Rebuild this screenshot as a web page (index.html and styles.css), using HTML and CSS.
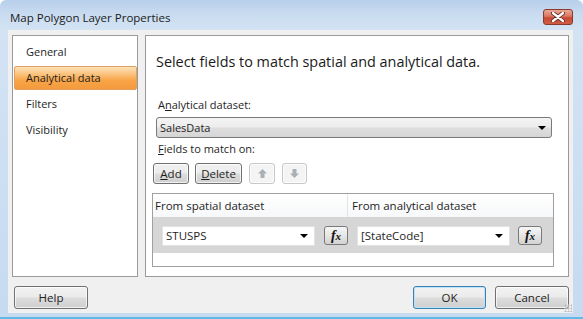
FILE: index.html
```html
<!DOCTYPE html>
<html lang="en">
<head>
    <meta charset="UTF-8">
    <title>Map Polygon Layer Properties</title>
    <link rel="stylesheet" href="styles.css">
</head>
<body>
    <div class="window">
        <div class="titlebar">
            <span class="title">Map Polygon Layer Properties</span>
            <div class="close">
                <svg width="14" height="10" viewBox="0 0 14 10">
                    <path d="M2 1 L12 9 M12 1 L2 9" stroke="#5a2318" stroke-width="4" stroke-linecap="round"/>
                    <path d="M2 1 L12 9 M12 1 L2 9" stroke="#ffffff" stroke-width="2.4" stroke-linecap="round"/>
                </svg>
            </div>
        </div>
        <div class="client">
            <div class="panes">
                <ul class="nav">
                    <li>General</li>
                    <li class="active">Analytical data</li>
                    <li>Filters</li>
                    <li>Visibility</li>
                </ul>
                <section class="page">
                    <h2>Select fields to match spatial and analytical data.</h2>
                    <div class="label">A<u>n</u>alytical dataset:</div>
                    <div class="dropdown">
                        <span>SalesData</span>
                        <span class="arrow"></span>
                    </div>
                    <div class="label label-fields"><u>F</u>ields to match on:</div>
                    <div class="toolbar">
                        <button class="btn btn-add"><u>A</u>dd</button>
                        <button class="btn btn-delete"><u>D</u>elete</button>
                        <button class="btn btn-icon" disabled>
                            <svg width="9" height="9" viewBox="0 0 9 9"><path d="M4.5 0 L9 4.5 L6.5 4.5 L6.5 9 L2.5 9 L2.5 4.5 L0 4.5 Z" fill="#aab0b6"/></svg>
                        </button>
                        <button class="btn btn-icon btn-down" disabled>
                            <svg width="9" height="9" viewBox="0 0 9 9"><path d="M4.5 9 L9 4.5 L6.5 4.5 L6.5 0 L2.5 0 L2.5 4.5 L0 4.5 Z" fill="#aab0b6"/></svg>
                        </button>
                    </div>
                    <div class="grid">
                        <div class="grid-head">
                            <div class="col col-first">From spatial dataset</div>
                            <div class="col">From analytical dataset</div>
                        </div>
                        <div class="grid-row">
                            <div class="cell cell-first">
                                <div class="combo"><span>STUSPS</span><span class="arrow"></span></div>
                                <button class="fx"><i>f</i><i class="x">x</i></button>
                            </div>
                            <div class="cell">
                                <div class="combo"><span>[StateCode]</span><span class="arrow"></span></div>
                                <button class="fx"><i>f</i><i class="x">x</i></button>
                            </div>
                        </div>
                    </div>
                </section>
            </div>
            <div class="footer">
                <button class="btn btn-help">Help</button>
                <span class="spacer"></span>
                <button class="btn btn-ok">OK</button>
                <button class="btn btn-cancel">Cancel</button>
            </div>
            <div class="grip"></div>
        </div>
    </div>
</body>
</html>
```
FILE: styles.css
```css
body {
    margin: 0;
    font-family: "Open Sans", "Noto Sans", Arial, sans-serif;
    font-size: 11px;
    color: #1e1e1e;
}
.window {
    width: 583px;
    height: 319px;
    box-sizing: border-box;
    display: flex;
    flex-direction: column;
    background: linear-gradient(180deg, #b7cfea 0px, #c9dbf0 14px, #d3e3f4 30px, #c6daf0 100%);
    border-radius: 6px 6px 0 0;
    border-bottom: 2px solid #62b8e6;
}
.titlebar {
    height: 30px;
    display: flex;
    align-items: flex-start;
}
.title {
    padding: 11px 0 0 10px;
    font-size: 11.5px;
    line-height: 14px;
    color: #1a1a1a;
    flex: 1;
}
.close {
    width: 30px;
    height: 16px;
    margin: 9px 10px 0 0;
    box-sizing: border-box;
    border: 1px solid #8a3a2c;
    border-radius: 3px;
    background: linear-gradient(180deg, #eaa996 0%, #d97561 45%, #c84a33 55%, #cf5d43 100%);
    display: flex;
    align-items: center;
    justify-content: center;
}
.client {
    margin: 0 10px 4px 8px;
    flex: 1;
    background: #f0f0f0;
    padding: 5px 4px 0 4px;
    position: relative;
}
.panes {
    display: flex;
    gap: 7px;
    height: 242px;
}
.nav {
    width: 126px;
    margin: 0;
    padding: 4px 0 0 0;
    list-style: none;
    background: #ffffff;
    border: 1px solid #9a9a9a;
    box-sizing: border-box;
}
.nav li {
    height: 24px;
    line-height: 24px;
    margin: 0 0 2px 1px;
    padding-left: 12px;
    font-size: 11px;
}
.nav li.active {
    background: linear-gradient(180deg, #fde2b8 0%, #fbc582 30%, #f8a548 60%, #f39a3c 100%);
    border: 1px solid #e0a060;
    border-radius: 2px;
    line-height: 22px;
    height: 22px;
    padding-left: 11px;
}
.page {
    flex: 1;
    background: #ffffff;
    border: 1px solid #9a9a9a;
    box-sizing: border-box;
}
.page h2 {
    margin: 16px 0 0 10px;
    font-size: 14.4px;
    line-height: 20px;
    font-weight: normal;
    color: #1a1a1a;
}
.label {
    margin: 25px 0 0 12px;
    line-height: 16px;
}
.label-fields {
    margin-top: 3px;
}
.dropdown {
    margin: 4px 16px 0 10px;
    height: 21px;
    box-sizing: border-box;
    border: 1px solid #7a7a7a;
    border-radius: 3px;
    background: linear-gradient(180deg, #f4f4f4 0%, #ececec 48%, #dedede 52%, #d6d6d6 100%);
    display: flex;
    align-items: center;
    justify-content: space-between;
    padding: 0 5px 0 3px;
}
.arrow {
    width: 0;
    height: 0;
    border-left: 4px solid transparent;
    border-right: 4px solid transparent;
    border-top: 4px solid #000000;
}
.toolbar {
    margin: 6px 0 0 7px;
    display: flex;
    gap: 6px;
}
.btn {
    font-family: inherit;
    font-size: 11.5px;
    color: #1e1e1e;
    height: 21px;
    padding: 0;
    box-sizing: border-box;
    border: 1px solid #707070;
    border-radius: 3px;
    background: linear-gradient(180deg, #f2f2f2 0%, #ebebeb 48%, #dddddd 52%, #cfcfcf 100%);
    box-shadow: inset 0 0 0 1px rgba(255, 255, 255, 0.7);
}
.btn-add {
    width: 36px;
}
.btn-delete {
    width: 47px;
}
.btn-icon {
    width: 26px;
    margin-left: 1px;
    border-color: #c8c8c8;
    background: #f4f4f4;
    display: flex;
    align-items: center;
    justify-content: center;
}
.btn-down {
    width: 25px;
}
.grid {
    margin: 9px 14px 0 6px;
    height: 74px;
    box-sizing: border-box;
    border: 1px solid #a0a0a0;
    background: #ffffff;
}
.grid-head {
    display: flex;
    height: 23px;
    background: linear-gradient(180deg, #ffffff 0%, #f7f8fa 100%);
    border-bottom: 1px solid #d5d5d5;
}
.col {
    flex: 1;
    line-height: 23px;
    padding-left: 4px;
    font-size: 11.5px;
}
.col-first {
    flex: none;
    width: 195px;
    box-sizing: border-box;
    padding-left: 2px;
    border-right: 1px solid #e4e4e4;
}
.grid-row {
    display: flex;
    height: 35px;
    background: #d6d6d6;
}
.cell {
    flex: 1;
    display: flex;
    align-items: center;
    gap: 8px;
    padding-left: 9px;
}
.cell-first {
    flex: none;
    width: 195px;
    box-sizing: border-box;
    gap: 9px;
}
.combo {
    width: 153px;
    height: 20px;
    box-sizing: border-box;
    background: #ffffff;
    border: 1px solid #e2e2e2;
    display: flex;
    align-items: center;
    justify-content: space-between;
    padding: 0 6px 0 3px;
    font-size: 11.5px;
}
.fx {
    width: 24px;
    height: 19px;
    padding: 0;
    border: 1px solid #7a7a7a;
    border-radius: 3px;
    background: linear-gradient(180deg, #f6f6f6 0%, #e6e6e6 50%, #d2d2d2 100%);
    font-family: "Liberation Serif", "DejaVu Serif", serif;
    font-weight: bold;
    font-size: 14px;
    line-height: 16px;
    color: #111111;
}
.fx .x {
    font-size: 11px;
}
.footer {
    display: flex;
    gap: 9px;
    margin: 9px 0 0 2px;
}
.footer .btn {
    width: 74px;
    height: 23px;
}
.spacer {
    flex: 1;
}
.btn-ok {
    border-color: #3c7fb1;
    box-shadow: inset 0 0 0 1px #b9e4fb;
    width: 73px !important;
}
.grip {
    position: absolute;
    right: 1px;
    bottom: 1px;
    width: 8px;
    height: 8px;
    background: radial-gradient(circle, #b8b8b8 0.8px, transparent 1.2px) 0 0 / 3px 3px;
}
```
